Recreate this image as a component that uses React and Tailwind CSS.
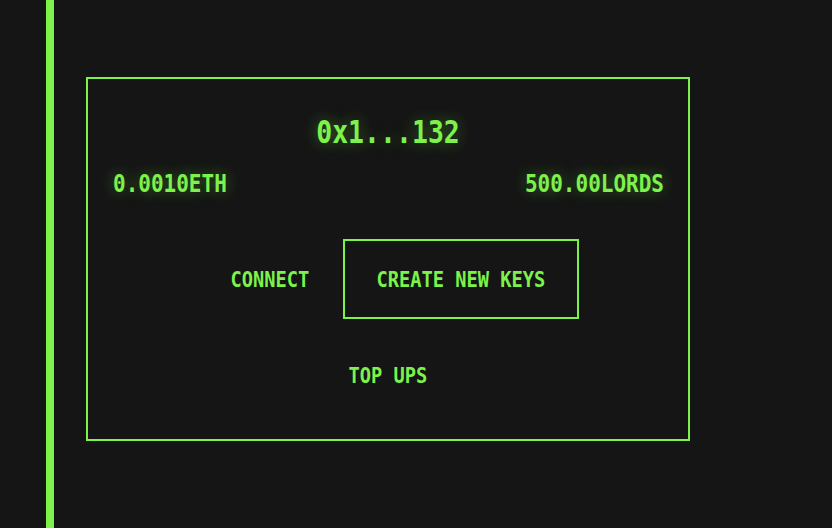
export default function App() {
  const mono = { fontFamily: '"DejaVu Sans Mono", "Liberation Mono", monospace' };
  return (
    <div className="w-[832px] h-[528px] bg-[#151515] flex overflow-hidden" style={mono}>
      <div className="ml-[46px] w-[8px] h-full bg-[#7cf24b] shrink-0" />
      <div className="ml-[32px] mt-[77px] w-[604px] h-[364px] border-2 border-[#7cf24b] flex flex-col text-[#7cf24b] pt-[33px] pb-[24px]">
        <div className="h-[40px] flex items-center justify-center">
          <span className="inline-block text-[26.5px] font-bold scale-y-[1.2] [text-shadow:0_0_14px_rgba(124,242,75,0.4)]">0x1...132</span>
        </div>
        <div className="mt-[17px] h-[32px] flex items-center justify-between pl-[25px] pr-[24px]">
          <span className="inline-block text-[21px] font-bold scale-y-[1.18] [text-shadow:0_0_14px_rgba(124,242,75,0.4)]">0.0010ETH</span>
          <span className="inline-block text-[21px] font-bold scale-y-[1.18] [text-shadow:0_0_14px_rgba(124,242,75,0.4)]">500.00LORDS</span>
        </div>
        <div className="mt-[38px] flex justify-center">
          <button className="w-[146px] h-[80px] border-2 border-transparent flex items-center justify-center pt-[2px]">
            <span className="inline-block text-[18.7px] font-bold scale-y-[1.14]">CONNECT</span>
          </button>
          <button className="w-[236px] h-[80px] border-2 border-[#7cf24b] flex items-center justify-center pt-[2px]">
            <span className="inline-block text-[18.7px] font-bold scale-y-[1.14] whitespace-pre">CREATE NEW KEYS</span>
          </button>
        </div>
        <div className="mt-[16px] flex justify-center">
          <button className="w-[146px] h-[80px] border-2 border-transparent flex items-center justify-center pt-[2px]">
            <span className="inline-block text-[18.7px] font-bold scale-y-[1.14] whitespace-pre">TOP UPS</span>
          </button>
        </div>
      </div>
    </div>
  );
}
